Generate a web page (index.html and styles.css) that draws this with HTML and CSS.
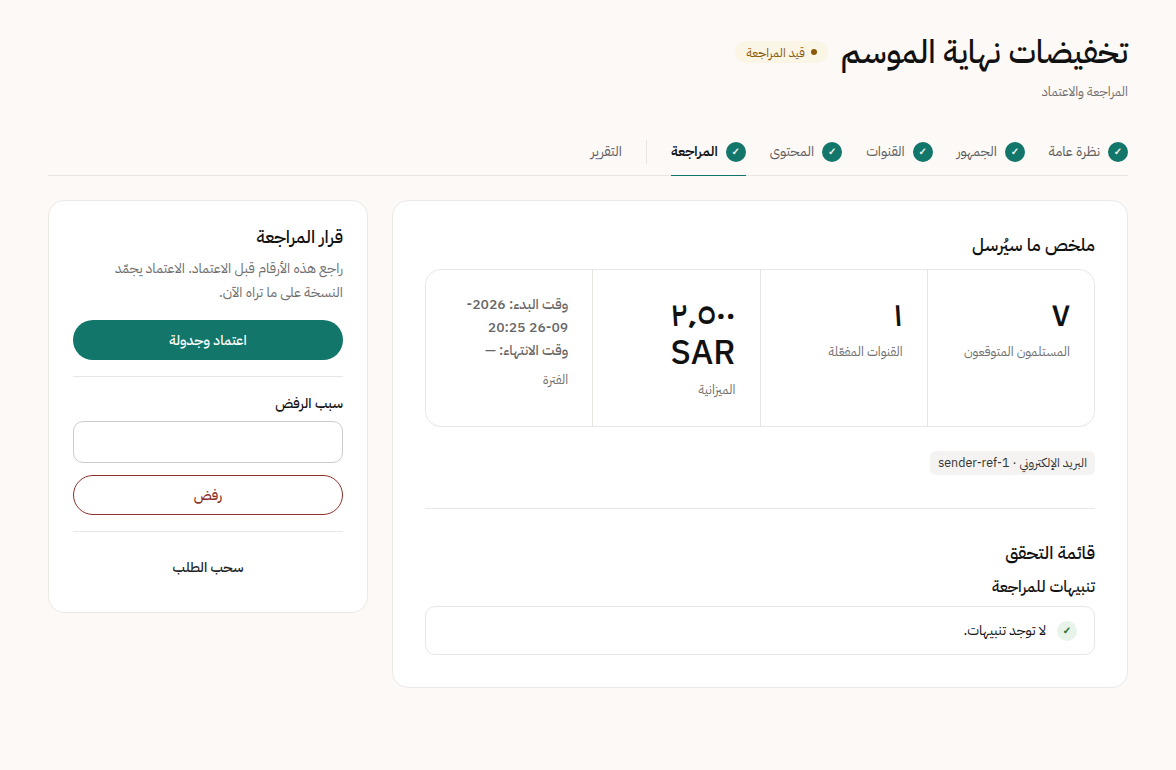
FILE: index.html
```
<!DOCTYPE html>
<html lang="ar" dir="rtl">
<head>
<meta charset="utf-8">
<title>تخفيضات نهاية الموسم</title>
<link rel="stylesheet" href="styles.css">
</head>
<body>
<div class="page">
  <header class="head">
    <div class="title-row">
      <h1>تخفيضات نهاية الموسم</h1>
      <span class="badge"><i class="dot"></i>قيد المراجعة</span>
    </div>
    <p class="sub">المراجعة والاعتماد</p>
  </header>
  <nav class="tabs">
    <a class="tab"><span class="tick">✓</span>نظرة عامة</a>
    <a class="tab"><span class="tick">✓</span>الجمهور</a>
    <a class="tab"><span class="tick">✓</span>القنوات</a>
    <a class="tab"><span class="tick">✓</span>المحتوى</a>
    <a class="tab active"><span class="tick">✓</span>المراجعة</a>
    <span class="tab-sep"></span>
    <a class="tab">التقرير</a>
  </nav>
  <div class="layout">
    <main class="card main">
      <h2>ملخص ما سيُرسل</h2>
      <div class="stats">
        <div class="stat"><div class="val">٧</div><div class="lbl">المستلمون المتوقعون</div></div>
        <div class="stat"><div class="val">١</div><div class="lbl">القنوات المفعّلة</div></div>
        <div class="stat"><div class="val">٢٬٥٠٠ SAR</div><div class="lbl">الميزانية</div></div>
        <div class="stat"><div class="period">وقت البدء: 2026-09-26 20:25<br>وقت الانتهاء: —</div><div class="lbl">الفترة</div></div>
      </div>
      <div class="chips"><span class="chip">البريد الإلكتروني · sender-ref-1</span></div>
      <hr class="rule">
      <h2 class="check">قائمة التحقق</h2>
      <h3>تنبيهات للمراجعة</h3>
      <div class="notice"><span class="ok">✓</span>لا توجد تنبيهات.</div>
    </main>
    <aside class="card side">
      <h2>قرار المراجعة</h2>
      <p class="note">راجع هذه الأرقام قبل الاعتماد. الاعتماد يجمّد النسخة على ما تراه الآن.</p>
      <button class="btn primary">اعتماد وجدولة</button>
      <hr class="rule small">
      <label class="field-label" for="reason">سبب الرفض</label>
      <input class="input" id="reason" type="text">
      <button class="btn danger">رفض</button>
      <hr class="rule small">
      <button class="btn ghost">سحب الطلب</button>
    </aside>
  </div>
</div>
</body>
</html>
```
FILE: styles.css
```
* { box-sizing: border-box; }
html, body { margin: 0; }
body {
  background: #fdf9f6;
  color: #111;
  font-family: "IBM Plex Sans Arabic", "Noto Sans", sans-serif;
  font-size: 14px;
  height: 770px;
  overflow: hidden;
}
.page { padding: 32px 48px; }
.title-row { display: flex; align-items: center; gap: 13px; }
h1 { margin: 0; font-size: 32px; line-height: 40px; font-weight: 500; }
.badge {
  display: inline-flex; align-items: center; gap: 6px;
  height: 22px; padding: 0 11px;
  background: #fbf5e6; color: #8a5a0b;
  border-radius: 11px; font-size: 12.5px; font-weight: 400;
}
.dot { width: 6px; height: 6px; border-radius: 50%; background: #8a5a0b; }
.sub { margin: 8px 0 0; color: #6f6f6f; font-size: 13px; line-height: 24px; }
.tabs {
  display: flex; align-items: center; gap: 24px;
  margin-top: 24px; height: 48px;
  border-bottom: 1px solid #e8e6e3;
}
.tab {
  display: flex; align-items: center; gap: 8px;
  height: 48px; color: #5f5f5f; font-size: 14px;
  border-bottom: 1px solid transparent; margin-bottom: -1px;
}
.tab.active { color: #111; font-weight: 600; border-bottom-color: #12766a; }
.tick {
  width: 20px; height: 20px; border-radius: 50%;
  background: #12766a; color: #fff; font-family: "DejaVu Sans", sans-serif; font-size: 10px;
  display: flex; align-items: center; justify-content: center; font-weight: 400;
  -webkit-text-stroke: 0.25px #fff;
}
.tab-sep { width: 1px; height: 24px; background: #e8e6e3; }
.layout { display: flex; gap: 24px; align-items: flex-start; margin-top: 24px; }
.card { background: #fff; border: 1px solid #ebe9e6; border-radius: 16px; }
.main { width: 736px; padding: 32px; }
.side { width: 320px; padding: 24px; }
h2 { margin: 0; font-size: 18px; line-height: 24px; font-weight: 500; }
h3 { margin: 9px 0 0; font-size: 16px; line-height: 26px; font-weight: 500; }
.stats {
  display: grid; grid-template-columns: repeat(4, 1fr); gap: 1px;
  margin-top: 12px; background: #e8e6e3;
  border: 1px solid #e8e6e3; border-radius: 16px; overflow: hidden;
}
.stat { padding: 24px; background: #fff; min-height: 156px; }
.val { font-size: 34px; line-height: 38px; font-weight: 500; padding-top: 2px; }
.lbl { margin-top: 8px; color: #6f6f6f; font-size: 13px; line-height: 20px; }
.period { font-size: 14px; line-height: 23px; color: #666; font-weight: 500; margin-top: -1px; }
.chips { display: flex; margin-top: 24px; }
.chip { background: #f4f3f1; border-radius: 6px; padding: 0 8px; height: 24px; line-height: 24px; font-size: 12.5px; color: #333; }
.rule { border: 0; border-top: 1px solid #e8e6e3; margin: 33px 0 32px; }
.rule.small { margin: 16px 0; }
.notice {
  display: flex; align-items: center; gap: 11px; margin-top: 6px;
  height: 49px; padding: 0 17px 0 12px;
  border: 1px solid #e8e6e3; border-radius: 10px; font-size: 14px;
}
.ok {
  width: 20px; height: 20px; border-radius: 50%;
  background: #e8f4ea; color: #156b28; font-family: "DejaVu Sans", sans-serif; font-size: 10px;
  display: flex; align-items: center; justify-content: center;
  -webkit-text-stroke: 0.5px #156b28;
}
.note { margin: 8px 0 0; color: #6f6f6f; font-size: 14px; line-height: 24px; }
.btn {
  display: block; width: 100%; height: 40px; border-radius: 20px;
  font: inherit; font-size: 14px; cursor: pointer; border: 0; background: none;
}
.primary { margin-top: 15px; background: #12766a; color: #fff; font-weight: 500; }
.danger { margin-top: 12px; border: 1px solid #8f2f2a; color: #8f2f2a; background: #fff; font-weight: 500; }
.ghost { color: #222; font-weight: 500; padding: 0 0 2px; }
.field-label { display: block; font-size: 14px; line-height: 20px; padding-top: 1px; margin-bottom: 7px; font-weight: 500; }
.input { display: block; width: 100%; height: 42px; border: 1px solid #cfcdca; border-radius: 10px; background: #fff; }
```
